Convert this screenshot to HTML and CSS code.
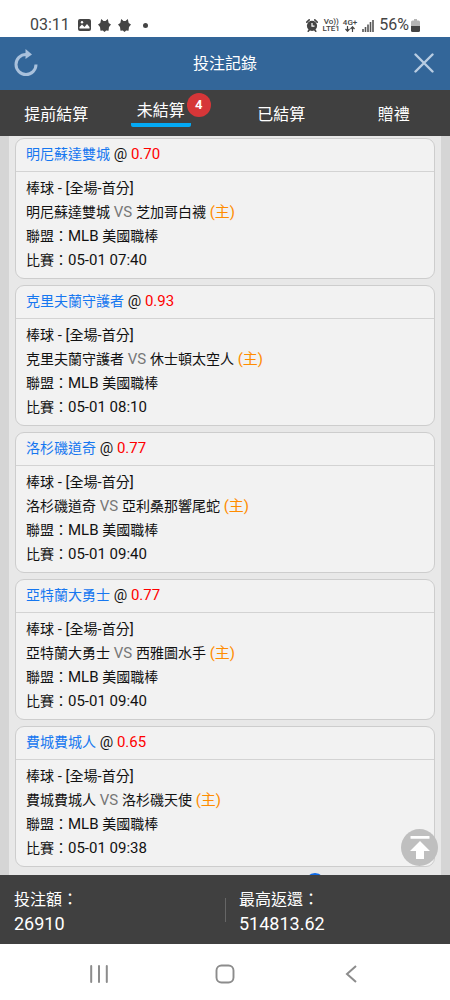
FILE: index.html
```html
<!DOCTYPE html>
<html lang="zh-Hant">
<head>
<meta charset="utf-8">
<meta name="viewport" content="width=device-width, initial-scale=1">
<title>投注記錄</title>
<link rel="stylesheet" href="styles.css">
</head>
<body>
<div class="app">
  <div class="status">
    <div class="status-group">
      <span class="status-text">03:11</span>
      <svg class="status-photo" width="13" height="12" viewBox="0 0 13 12"><rect width="13" height="12" rx="2" fill="#444"/><path d="M1.500 9.500V8L4 5.500 6.500 8 9 5l2.500 3v1.500z" fill="#fff"/><circle cx="4" cy="3.300" r="1.200" fill="#fff"/></svg>
      <svg class="status-fox" width="13" height="13" viewBox="0 0 13 13"><path d="M3.200 0 5.500 2h2L9.800 0l.9 4L13 5.500l-2 2.500-.5 3.800-2.300-.3L6.500 13l-1.700-1.500-2.300.3L2 8 0 5.500 2.300 4z" fill="#444"/></svg>
      <svg class="status-fox" width="13" height="13" viewBox="0 0 13 13"><path d="M3.200 0 5.500 2h2L9.800 0l.9 4L13 5.500l-2 2.500-.5 3.800-2.300-.3L6.500 13l-1.700-1.500-2.300.3L2 8 0 5.500 2.300 4z" fill="#444"/></svg>
      <span class="status-dot"></span>
    </div>
    <div class="status-group">
      <svg width="12" height="13" viewBox="0 0 12 13"><circle cx="6" cy="6.800" r="5.100" fill="#444"/><path d="M.8 3.200 3.200.9M11.200 3.200 8.800.9M2.200 12.200l1.500-1.700M9.800 12.200l-1.500-1.700" stroke="#444" stroke-width="1.600" stroke-linecap="round"/><path d="M6 4v3.200h2.500" fill="none" stroke="#fff" stroke-width="1.200"/></svg>
      <span class="carrier"><span>Vo))</span><span>LTE1</span></span>
      <span class="network"><span>4G+</span><svg width="10" height="6" viewBox="0 0 10 6"><path d="M2.500 0v5M.5 3l2 2.200 2-2.200M7.500 6V1M5.500 3l2-2.200 2 2.200" fill="none" stroke="#444" stroke-width="1.200"/></svg></span>
      <svg class="signal" width="12" height="13" viewBox="0 0 12 13"><path d="M1 10v3M3.500 8v5M6 5.500v7.500M8.500 3v10M11 1v12" stroke="#555" stroke-width="1.600"/></svg>
      <span class="status-text">56%</span>
      <svg class="battery" width="9" height="13" viewBox="0 0 9 13"><path d="M3 0h3v1.500h1.500A1.500 1.500 0 0 1 9 3v4H0V3a1.500 1.500 0 0 1 1.500-1.500H3z" fill="#b5b5b5"/><path d="M0 7h9v4.500A1.500 1.500 0 0 1 7.500 13h-6A1.500 1.500 0 0 1 0 11.500z" fill="#444"/></svg>
    </div>
  </div>

  <header class="header">
    <button class="icon-button" type="button" aria-label="重新整理"><svg width="26" height="28" viewBox="0 0 26 28"><path d="M14 5.500H13A10 10 0 1 0 23 15.500" fill="none" stroke="#a9c1dc" stroke-width="3"/><path d="M12.500 0l6.500 5.500-6.500 4.500z" fill="#a9c1dc"/></svg></button>
    <h1 class="title">投注記錄</h1>
    <button class="icon-button" type="button" aria-label="關閉"><svg width="20" height="20" viewBox="0 0 20 20"><path d="M1.500 1.500l17 17M18.500 1.500l-17 17" stroke="#b9cde2" stroke-width="2.400" stroke-linecap="round"/></svg></button>
  </header>

  <nav class="tabs">
    <button class="tab" type="button">提前結算</button>
    <button class="tab tab-active" type="button"><span class="tab-label">未結算</span><span class="badge">4</span></button>
    <button class="tab" type="button">已結算</button>
    <button class="tab" type="button">贈禮</button>
  </nav>

  <main class="content">
    <div class="list">
      <article class="card">
        <h2 class="card-head"><a class="team" href="#">明尼蘇達雙城</a> @ <span class="odds">0.70</span></h2>
        <div class="card-body">
          <p><span class="han">棒球</span> - [<span class="han">全場</span>-<span class="han">首分</span>]</p>
          <p><span class="han">明尼蘇達雙城</span> <span class="vs">VS</span> <span class="han">芝加哥白襪</span> <span class="home">(主)</span></p>
          <p><span class="han">聯盟：</span>MLB <span class="han">美國職棒</span></p>
          <p><span class="han">比賽：</span>05-01 07:40</p>
        </div>
      </article>
      <article class="card">
        <h2 class="card-head"><a class="team" href="#">克里夫蘭守護者</a> @ <span class="odds">0.93</span></h2>
        <div class="card-body">
          <p><span class="han">棒球</span> - [<span class="han">全場</span>-<span class="han">首分</span>]</p>
          <p><span class="han">克里夫蘭守護者</span> <span class="vs">VS</span> <span class="han">休士頓太空人</span> <span class="home">(主)</span></p>
          <p><span class="han">聯盟：</span>MLB <span class="han">美國職棒</span></p>
          <p><span class="han">比賽：</span>05-01 08:10</p>
        </div>
      </article>
      <article class="card">
        <h2 class="card-head"><a class="team" href="#">洛杉磯道奇</a> @ <span class="odds">0.77</span></h2>
        <div class="card-body">
          <p><span class="han">棒球</span> - [<span class="han">全場</span>-<span class="han">首分</span>]</p>
          <p><span class="han">洛杉磯道奇</span> <span class="vs">VS</span> <span class="han">亞利桑那響尾蛇</span> <span class="home">(主)</span></p>
          <p><span class="han">聯盟：</span>MLB <span class="han">美國職棒</span></p>
          <p><span class="han">比賽：</span>05-01 09:40</p>
        </div>
      </article>
      <article class="card">
        <h2 class="card-head"><a class="team" href="#">亞特蘭大勇士</a> @ <span class="odds">0.77</span></h2>
        <div class="card-body">
          <p><span class="han">棒球</span> - [<span class="han">全場</span>-<span class="han">首分</span>]</p>
          <p><span class="han">亞特蘭大勇士</span> <span class="vs">VS</span> <span class="han">西雅圖水手</span> <span class="home">(主)</span></p>
          <p><span class="han">聯盟：</span>MLB <span class="han">美國職棒</span></p>
          <p><span class="han">比賽：</span>05-01 09:40</p>
        </div>
      </article>
      <article class="card">
        <h2 class="card-head"><a class="team" href="#">費城費城人</a> @ <span class="odds">0.65</span></h2>
        <div class="card-body">
          <p><span class="han">棒球</span> - [<span class="han">全場</span>-<span class="han">首分</span>]</p>
          <p><span class="han">費城費城人</span> <span class="vs">VS</span> <span class="han">洛杉磯天使</span> <span class="home">(主)</span></p>
          <p><span class="han">聯盟：</span>MLB <span class="han">美國職棒</span></p>
          <p><span class="han">比賽：</span>05-01 09:38</p>
        </div>
      </article>
      <div class="more"><span class="more-dot"></span></div>
    </div>
    <button class="to-top" type="button" aria-label="回到頂端"><svg width="20" height="24" viewBox="0 0 20 24"><rect x=".5" width="19" height="2.800" rx=".6" fill="#fff"/><path d="M10 5l10 10h-6v8H6v-8H0z" fill="#fff"/></svg></button>
  </main>

  <footer class="totals">
    <div class="total"><span>投注額：</span><span class="amount">26910</span></div>
    <div class="total total-divided"><span>最高返還：</span><span class="amount">514813.62</span></div>
  </footer>

  <div class="sysnav">
    <button class="sys-button" type="button" aria-label="最近使用"><svg width="18" height="18" viewBox="0 0 18 18"><path d="M1.200 1v16M9 1v16M16.800 1v16" stroke="#8c8c8c" stroke-width="2" stroke-linecap="round"/></svg></button>
    <button class="sys-button" type="button" aria-label="主畫面"><svg width="20" height="20" viewBox="0 0 20 20"><rect x="1.500" y="1.500" width="17" height="17" rx="5" fill="none" stroke="#8c8c8c" stroke-width="1.900"/></svg></button>
    <button class="sys-button" type="button" aria-label="返回"><svg width="12" height="18" viewBox="0 0 12 18"><path d="M11 1 2 9l9 8" fill="none" stroke="#8c8c8c" stroke-width="2"/></svg></button>
  </div>
</div>
</body>
</html>
```

FILE: styles.css
```css
* {
  box-sizing: border-box;
}

body {
  margin: 0;
  background: #fff;
  color: #111;
  font-family: Roboto, "Noto Sans CJK TC", sans-serif;
}

button {
  margin: 0;
  padding: 0;
  border: 0;
  background: none;
  color: inherit;
  font: inherit;
}

h1, h2, p {
  margin: 0;
  font-weight: 400;
}

svg {
  display: block;
  flex: none;
}

.app {
  display: flex;
  flex-direction: column;
  height: 100vh;
}

/* Status bar */
.status {
  display: flex;
  justify-content: space-between;
  flex: none;
  padding: 14px 30px 0;
  height: 37px;
  color: #444;
}

.status-group {
  display: flex;
  align-items: center;
  height: 22px;
}

.status-text {
  font-size: 16px;
  line-height: 22px;
}

.status-photo {
  margin-left: 8px;
}

.status-fox {
  margin-left: 7px;
}

.status-dot {
  width: 5px;
  height: 5px;
  margin-left: 12px;
  border-radius: 50%;
  background: #444;
}

.carrier, .network {
  display: flex;
  flex-direction: column;
  align-items: center;
  margin-left: 5px;
  font-size: 8px;
  font-weight: 500;
  line-height: 7px;
}

.network {
  margin-left: 3px;
}

.signal {
  margin: 0 5px;
}

.battery {
  margin-left: 2px;
}

/* Title bar */
.header {
  display: flex;
  align-items: center;
  justify-content: space-between;
  flex: none;
  height: 53px;
  background: #336699;
  color: #fff;
}

.icon-button {
  display: flex;
  align-items: center;
  justify-content: center;
  width: 52px;
  height: 52px;
  padding-bottom: 2px;
}

.title {
  font-size: 16px;
  line-height: 24px;
}

/* Tabs */
.tabs {
  display: grid;
  grid-template-columns: repeat(4, 1fr);
  flex: none;
  height: 46px;
  background: #404040;
  color: #fff;
  font-size: 16px;
  line-height: 24px;
}

.tab {
  display: flex;
  align-items: center;
  justify-content: center;
  padding-top: 4px;
}

.tab-active {
  align-items: flex-start;
  padding: 3px 0 0 4px;
}

.tab-label {
  padding: 6px 6px 0;
  border-bottom: 4px solid #03a9f4;
  border-radius: 2px;
}

.badge {
  width: 24px;
  height: 24px;
  margin-left: -4px;
  border-radius: 50%;
  background: #d63638;
  font-size: 13px;
  font-weight: 700;
}

/* Bet list */
.content {
  position: relative;
  flex: 1;
  min-height: 0;
  padding: 0 9px;
  background: #d5d5d5;
}

.list {
  display: flex;
  flex-direction: column;
  gap: 6px;
  height: 100%;
  padding: 2px 6px 0;
  overflow-y: auto;
  scrollbar-width: none;
  background: #e8e8e8;
}

.card {
  flex: none;
  border: 1px solid #cdcdcd;
  border-radius: 9px;
  background: #f2f2f2;
  font-size: 15px;
  line-height: 24px;
  white-space: nowrap;
}

.card-head {
  height: 33px;
  padding: 3px 10px 5px;
  border-bottom: 1px solid #d3d3d3;
  font-size: 15px;
}

.card-body {
  padding: 4px 10px 6px;
}

.card-body p {
  height: 24px;
}

.team, .han {
  font-size: 14px;
}

.team {
  color: #1677f0;
  text-decoration: none;
}

.odds {
  color: #f00;
}

.vs {
  color: #777;
}

.home {
  color: #ff8c00;
}

.more {
  display: flex;
  justify-content: flex-end;
  flex: none;
  padding-right: 110px;
}

.more-dot {
  width: 20px;
  height: 20px;
  border-radius: 50%;
  background: #0d6ae8;
}

.to-top {
  position: absolute;
  right: 12px;
  bottom: 9px;
  display: flex;
  align-items: center;
  justify-content: center;
  width: 37px;
  height: 37px;
  border-radius: 50%;
  background: #bfbfbf;
}

/* Totals */
.totals {
  display: grid;
  grid-template-columns: 1fr 1fr;
  align-items: center;
  flex: none;
  height: 69px;
  background: #404040;
  color: #fff;
  font-size: 16px;
  line-height: 24px;
}

.total {
  display: flex;
  flex-direction: column;
  justify-content: center;
  padding: 4px 14px 0;
}

.total-divided {
  background: linear-gradient(#666, #666) left center / 1px 24px no-repeat;
}

.amount {
  font-size: 18px;
}

/* System navigation */
.sysnav {
  display: flex;
  align-items: center;
  justify-content: center;
  gap: 106px;
  flex: none;
  height: 56px;
  padding-top: 3px;
}

.sys-button {
  display: flex;
  justify-content: center;
  width: 20px;
}
```
